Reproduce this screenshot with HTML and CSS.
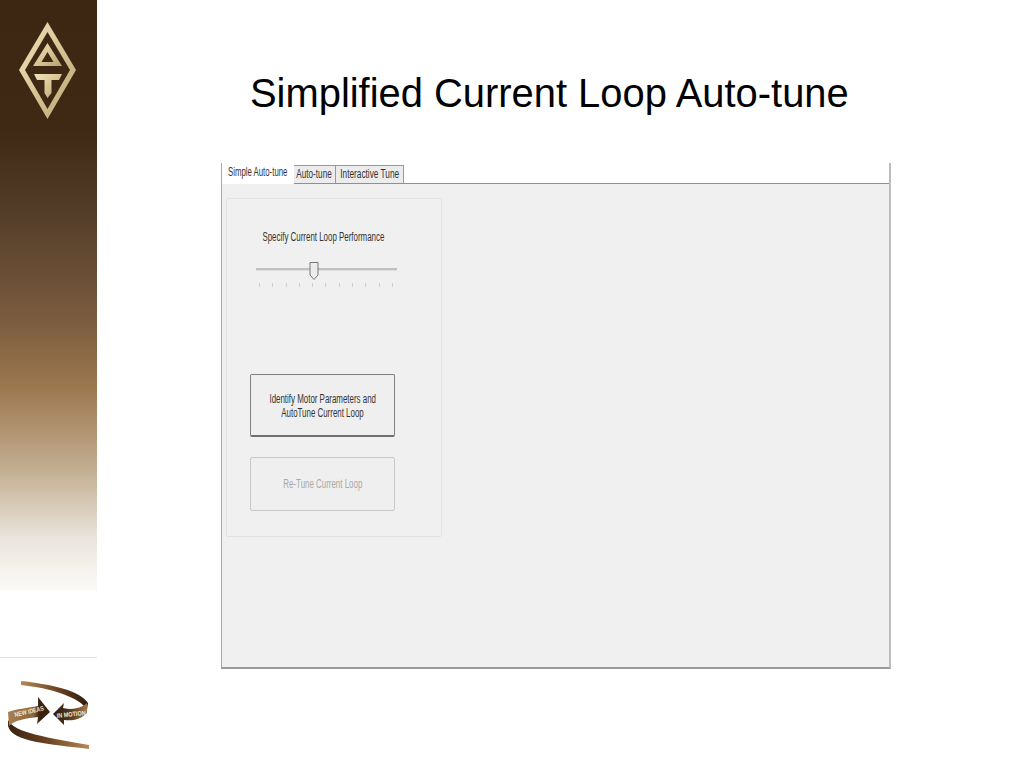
FILE: index.html
```html
<!DOCTYPE html>
<html lang="en">
<head>
    <meta charset="UTF-8">
    <title>Simplified Current Loop Auto-tune</title>
    <link rel="stylesheet" href="styles.css">
</head>
<body>
    <div class="slide">
        <div class="sidebar">
            <svg class="logo" width="97" height="130" viewBox="0 0 97 130">
                <defs>
                    <linearGradient id="gold" x1="0" y1="0" x2="1" y2="1">
                        <stop offset="0" stop-color="#f0e4bc"/>
                        <stop offset="0.5" stop-color="#d8c595"/>
                        <stop offset="1" stop-color="#b9a271"/>
                    </linearGradient>
                </defs>
                <path d="M47.5 22 L76 70 L47.5 119 L19 70 Z M47.5 32 L25 70 L47.5 109 L70 70 Z" fill="url(#gold)" fill-rule="evenodd"/>
                <path d="M47.5 43 L62 66 L33 66 Z M47.5 52 L41.5 62 L53.5 62 Z" fill="url(#gold)" fill-rule="evenodd"/>
                <path d="M34 74 L62 74 L59 80 L51.5 80 L51.5 93 L47.5 98 L44.5 93 L44.5 80 L37 80 Z" fill="url(#gold)"/>
            </svg>
            <div class="sidebar-foot">
                <svg class="motto" width="97" height="110" viewBox="0 658 97 110">
                    <defs>
                        <linearGradient id="ribbon" x1="0" y1="0" x2="1" y2="0">
                            <stop offset="0" stop-color="#3a2212"/>
                            <stop offset="0.5" stop-color="#6b4322"/>
                            <stop offset="1" stop-color="#b58a58"/>
                        </linearGradient>
                        <linearGradient id="ribbon-top" x1="0" y1="0" x2="1" y2="0">
                            <stop offset="0" stop-color="#b58a58"/>
                            <stop offset="0.55" stop-color="#6b4322"/>
                            <stop offset="1" stop-color="#2e1b0e"/>
                        </linearGradient>
                        <linearGradient id="band-left" x1="0" y1="0" x2="1" y2="0">
                            <stop offset="0" stop-color="#a87f50"/>
                            <stop offset="0.6" stop-color="#8d673d"/>
                            <stop offset="0.75" stop-color="#3a2212"/>
                            <stop offset="1" stop-color="#3a2212"/>
                        </linearGradient>
                        <linearGradient id="band-right" x1="0" y1="0" x2="1" y2="0">
                            <stop offset="0" stop-color="#2e1b0e"/>
                            <stop offset="0.4" stop-color="#4a2e17"/>
                            <stop offset="1" stop-color="#a07748"/>
                        </linearGradient>
                    </defs>
                    <path d="M21 681 C48 684 80 690 88 703 L87 710 C80 697 50 688 21 685 Z" fill="url(#ribbon-top)"/>
                    <path d="M8 720 C14 733 50 738 89 745 L89 749 C50 744 12 742 8 726 Z" fill="url(#ribbon)"/>
                    <path d="M8 712 C16 709 28 708 38 706 L38 697 L50 712 L37 724 L38 717 C28 718 14 720 9 726 Z" fill="url(#band-left)"/>
                    <path d="M53 714 L64 703 L63 708 C72 710 80 709 87 703 L87 713 C80 720 72 721 64 720 L64 725 Z" fill="url(#band-right)"/>
                    <text class="motto-text" x="15" y="717" textLength="30" lengthAdjust="spacingAndGlyphs" transform="rotate(-13 15 717)">NEW IDEAS</text>
                    <text class="motto-text" x="57" y="718" textLength="29" lengthAdjust="spacingAndGlyphs" transform="rotate(-6 57 718)">IN MOTION</text>
                </svg>
            </div>
        </div>
        <div class="main">
            <h1>Simplified Current Loop Auto-tune</h1>
            <div class="window">
                <div class="tabs">
                    <div class="tab tab-simple"><span class="squeeze">Simple Auto-tune</span></div>
                    <div class="tab tab-auto"><span class="squeeze">Auto-tune</span></div>
                    <div class="tab tab-inter"><span class="squeeze">Interactive Tune</span></div>
                </div>
                <div class="tab-body">
                    <div class="group">
                        <p class="group-label"><span class="squeeze">Specify Current Loop Performance</span></p>
                        <div class="slider">
                            <div class="track"></div>
                            <svg class="thumb" width="10" height="20" viewBox="0 0 10 20">
                                <path d="M1 1.5 H9 V14 L5 18.5 L1 14 Z" fill="#ececec" stroke="#777"/>
                            </svg>
                        </div>
                        <div class="ticks">
                            <span></span><span></span><span></span><span></span><span></span><span></span>
                            <span></span><span></span><span></span><span></span><span></span>
                        </div>
                        <button class="btn btn-main">
                            <span class="squeeze">Identify Motor Parameters and</span>
                            <span class="squeeze">AutoTune Current Loop</span>
                        </button>
                        <button class="btn btn-off" disabled><span class="squeeze">Re-Tune Current Loop</span></button>
                    </div>
                </div>
            </div>
        </div>
    </div>
</body>
</html>
```

FILE: styles.css
```css
body {
    margin: 0;
    background-color: #fff;
    font-family: "Liberation Sans", Arial, sans-serif;
}

.slide {
    display: flex;
    width: 1024px;
    height: 768px;
    overflow: hidden;
}

/* brown bar on the left */
.sidebar {
    width: 97px;
    height: 768px;
    display: flex;
    flex-direction: column;
    justify-content: space-between;
    background: linear-gradient(to bottom, #3d2713 0, #3f2814 130px, #563f2a 220px, #7b5c3f 320px, #9c774e 387px, #c3ae92 470px, #e8e3da 536px, #f5f3ee 570px, #fbfaf8 590px, #fff 592px);
}

.logo {
    display: block;
}

.sidebar-foot {
    height: 111px;
    border-top: 1px solid #e3e3e3;
    box-sizing: border-box;
}

.motto {
    display: block;
}

.motto-text {
    font-size: 6.5px;
    font-weight: bold;
    fill: #f3ead9;
}

.main {
    flex: 1;
    padding-left: 124px;
}

h1 {
    margin: 0;
    height: 163px;
    box-sizing: border-box;
    padding: 70px 0 0 29px;
    font-size: 39.9px;
    line-height: 46px;
    font-weight: normal;
    color: #000;
    white-space: nowrap;
}

.window {
    width: 670px;
    height: 506px;
    box-sizing: border-box;
    border-left: 1px solid #a8a8a8;
    border-right: 2px solid #bdbdbd;
    border-bottom: 2px solid #9a9a9a;
    display: flex;
    flex-direction: column;
}

/* the screenshot text is narrower than any installed font */
.squeeze {
    display: block;
    white-space: nowrap;
    font-size: 12px;
    line-height: 14px;
    transform: scaleX(0.66);
}

.tabs {
    display: flex;
    height: 20px;
    align-items: flex-end;
    border-bottom: 1px solid #8f8f8f;
}

.tab {
    height: 18px;
    box-sizing: border-box;
    display: flex;
    justify-content: center;
    padding-top: 1px;
    color: #333;
    background-color: #ececec;
    border: 1px solid #999;
    border-bottom: none;
    border-left: none;
}

.tab-simple {
    width: 72px;
    height: 20px;
    padding-top: 1px;
    background-color: #fff;
    border: none;
    margin-bottom: -1px;
}

.tab-auto {
    width: 42px;
}

.tab-inter {
    width: 68px;
}

.tab-simple .squeeze {
    transform: scaleX(0.65);
}

.tab-auto .squeeze {
    transform: scaleX(0.68);
}

.tab-inter .squeeze {
    transform: scaleX(0.69);
}

.tab-body {
    flex: 1;
    background-color: #f0f0f0;
    padding: 14px 0 0 4px;
}

.group {
    width: 216px;
    height: 339px;
    box-sizing: border-box;
    border: 1px solid #e2e2e2;
    border-radius: 2px;
    padding-top: 31px;
}

.group-label {
    margin: 0;
    width: 192px;
    display: flex;
    justify-content: center;
    color: #333;
}

.slider {
    position: relative;
    height: 20px;
    margin: 15px 0 0 29px;
    width: 141px;
    display: flex;
    align-items: center;
}

.track {
    width: 100%;
    height: 2px;
    background-color: #c0c0c0;
    border-bottom: 1px solid #e0e0e0;
}

.thumb {
    position: absolute;
    left: 52.5px;
    top: 2px;
}

.ticks {
    display: flex;
    justify-content: space-between;
    width: 134px;
    margin: 4px 0 0 32px;
}

.ticks span {
    width: 1px;
    height: 4px;
    background-color: #d0d0d0;
}

.btn {
    display: flex;
    flex-direction: column;
    align-items: center;
    justify-content: center;
    width: 145px;
    margin-left: 23px;
    box-sizing: border-box;
    background-color: #efefef;
    font-family: inherit;
    border-radius: 2px;
    padding: 0;
}

.btn-main {
    height: 63px;
    margin-top: 87px;
    padding-top: 1px;
    border: 1px solid #808080;
    border-bottom: 2px solid #707070;
    color: #333;
}

.btn-off {
    height: 54px;
    margin-top: 20px;
    border: 1px solid #c8c8c8;
    color: #a8a8a8;
}
```
